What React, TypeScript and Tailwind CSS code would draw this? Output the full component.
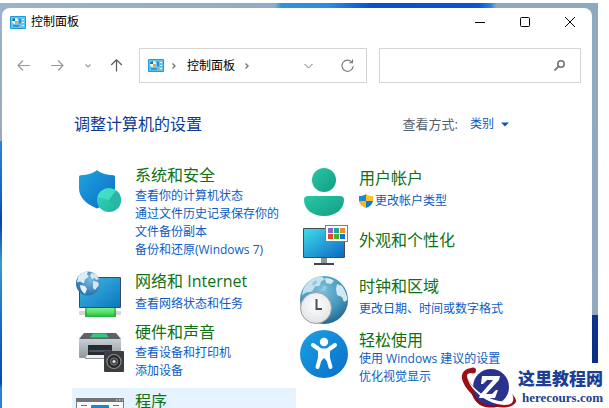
import { useState, type ReactNode } from "react";
import clsx from "clsx";

type Category = {
  id: string;
  title: string;
  icon: ReactNode;
  links: string[];
  className?: string;
  iconClassName?: string;
  textClassName?: string;
  linksClassName?: string;
  shielded?: boolean;
  active?: boolean;
};

const leftColumn: Category[] = [
  {
    id: "security",
    title: "系统和安全",
    icon: <SecurityIcon />,
    links: ["查看你的计算机状态", "通过文件历史记录保存你的文件备份副本", "备份和还原(Windows 7)"],
    className: "pt-1 pb-2.5",
    iconClassName: "self-start pt-0.5",
    linksClassName: "mt-0.5",
  },
  {
    id: "network",
    title: "网络和 Internet",
    icon: <NetworkIcon />,
    links: ["查看网络状态和任务"],
    className: "pt-0.5",
    iconClassName: "self-center",
    linksClassName: "mt-1",
  },
  {
    id: "hardware",
    title: "硬件和声音",
    icon: <HardwareIcon />,
    links: ["查看设备和打印机", "添加设备"],
    className: "pt-[3px] pb-2",
    iconClassName: "self-center",
    linksClassName: "mt-0.5",
  },
  {
    id: "programs",
    title: "程序",
    icon: <ProgramsIcon />,
    links: [],
    className: "pt-[3px] pb-2",
    iconClassName: "self-center",
    active: true,
  },
];

const rightColumn: Category[] = [
  {
    id: "accounts",
    title: "用户帐户",
    icon: <AccountsIcon />,
    links: ["更改帐户类型"],
    linksClassName: "mt-1",
    shielded: true,
  },
  {
    id: "appearance",
    title: "外观和个性化",
    icon: <AppearanceIcon />,
    links: [],
    textClassName: "pt-2",
  },
  {
    id: "clock",
    title: "时钟和区域",
    icon: <ClockIcon />,
    links: ["更改日期、时间或数字格式"],
    linksClassName: "mt-1",
  },
  {
    id: "access",
    title: "轻松使用",
    icon: <AccessIcon />,
    links: ["使用 Windows 建议的设置", "优化视觉显示"],
  },
];

function ControlPanelIcon() {
  return (
    <svg viewBox="0 0 16 13" className="h-[13px] w-4 shrink-0" aria-hidden="true">
      <rect width="16" height="13" rx="1" fill="#1f9ad6" />
      <rect x="1" y="1" width="14" height="11" fill="#5cc6f5" />
      <circle cx="5" cy="5" r="3" fill="#f4f9fc" />
      <path d="M5 5V2a3 3 0 0 0-3 3z" fill="#176fb5" />
      <path d="M5 5h3a3 3 0 0 1-3 3z" fill="#e8a33c" />
      <path d="M12 3.500h2M12 6.500h2M12 9.500h2" stroke="#fff" strokeWidth="1" />
      <path d="M10 2.500v5M3 10h6" stroke="#1667a8" strokeWidth="1.200" />
      <path d="M9.500 10h2" stroke="#e8a33c" strokeWidth="1" />
    </svg>
  );
}

function SecurityIcon() {
  return (
    <svg viewBox="0 0 48 48" className="size-12" aria-hidden="true">
      <defs>
        <linearGradient id="sec-a" x1="0" y1="0" x2="1" y2="1">
          <stop offset="0" stopColor="#1fa5dd" />
          <stop offset="1" stopColor="#0b6bc9" />
        </linearGradient>
        <linearGradient id="sec-b" x1="0" y1="0" x2="1" y2="1">
          <stop offset="0" stopColor="#34dcc0" />
          <stop offset="1" stopColor="#1fae9b" />
        </linearGradient>
      </defs>
      <path d="M21 3c4 3.500 9 4.800 16.500 5.200q1.500.1 1.500 1.800v11c0 9-6 15.500-18 20.500C9 36.500 3 30 3 21V10q0-1.700 1.500-1.800C12 7.800 17 6.500 21 3z" fill="url(#sec-a)" />
      <circle cx="33" cy="33" r="12" fill="url(#sec-b)" />
      <path d="M33 33l7-9.500A12 12 0 0 1 41 42z" fill="#27b7a4" />
      <path d="M33 33L21.500 30A12 12 0 0 1 40 23.500z" fill="#4be3cc" opacity=".7" />
    </svg>
  );
}

function NetworkIcon() {
  return (
    <svg viewBox="0 0 48 48" className="size-12" aria-hidden="true">
      <defs>
        <linearGradient id="net-a" x1="0" y1="0" x2="1" y2="1">
          <stop offset="0" stopColor="#3fb8e6" />
          <stop offset="1" stopColor="#0d78bd" />
        </linearGradient>
        <radialGradient id="net-b" cx=".6" cy=".35" r=".7">
          <stop offset="0" stopColor="#7cbbe0" />
          <stop offset="1" stopColor="#1c6da6" />
        </radialGradient>
        <linearGradient id="net-c" x1="0" y1="0" x2="0" y2="1">
          <stop offset="0" stopColor="#7dee86" />
          <stop offset=".5" stopColor="#54e066" />
          <stop offset="1" stopColor="#22b03f" />
        </linearGradient>
      </defs>
      <rect x="3" y="6" width="42" height="31" rx="1" fill="#3c4a55" />
      <rect x="4" y="7" width="40" height="29" fill="url(#net-a)" />
      <rect x="3" y="40" width="42" height="4" rx="1" fill="#d4d7d9" />
      <rect x="9" y="37" width="31" height="9" rx="1" fill="url(#net-c)" />
      <path d="M10 37v9M39 37v9" stroke="#1a9a3a" strokeWidth="1" />
      <circle cx="12" cy="12.500" r="12" fill="url(#net-b)" />
      <path d="M2 6c3-4 6-5.500 10-5.500l-1 3 2 2-4 3-1 4-4-2-3 1z" fill="#dcecf6" />
      <path d="M4 14l5 1 2 3-2 5c-3-2-5-5-5-9z" fill="#e6f1f8" />
      <path d="M15 2l5 1 3 5-3 1-1-2-3 1-2-3zM17 10l5 1 1 3-4 5-2-2z" fill="#d3e7f3" />
    </svg>
  );
}

function HardwareIcon() {
  return (
    <svg viewBox="0 0 48 48" className="size-12" aria-hidden="true">
      <defs>
        <linearGradient id="hw-a" x1="0" y1="0" x2="0" y2="1">
          <stop offset="0" stopColor="#c9cfd4" />
          <stop offset="1" stopColor="#8e979e" />
        </linearGradient>
      </defs>
      <path d="M8 6h32l5 6H3z" fill="#5a6268" />
      <path d="M17 6.500h13l3 4H14z" fill="#35c879" />
      <rect x="3" y="12" width="42" height="19" rx="1" fill="url(#hw-a)" />
      <path d="M12 18h24v10H12z" fill="#262c31" />
      <path d="M13 23h22v2H13z" fill="#4c555c" />
      <path d="M11 28h26l-1 4H9z" fill="#eef0f1" />
      <path d="M9 31h20v1H9z" fill="#8b9399" />
      <rect x="28" y="24" width="20" height="21" rx="1" fill="#3b3e41" />
      <circle cx="38" cy="34.500" r="7" fill="#232527" stroke="#898e92" strokeWidth="1.200" />
      <circle cx="38" cy="34.500" r="3.800" fill="#46494c" stroke="#6f7478" />
      <circle cx="38" cy="34.500" r="1.500" fill="#dfe3e6" />
    </svg>
  );
}

function ProgramsIcon() {
  return (
    <svg viewBox="0 0 48 48" className="size-12" aria-hidden="true">
      <path d="M0 7h48v41H0z" fill="#7c8184" />
      <path d="M1 11h46v36H1z" fill="#f6f8f9" />
      <path d="M0 7h48v4H0z" fill="#6f7376" />
      <path d="M40 9h1.500M43 9h1.500M46 9h1" stroke="#fff" strokeWidth="1" />
      <rect x="15" y="14" width="18" height="18" rx="1" fill="#1a86d2" />
      <path d="M5 14.500h6M5 22.500h6M37 14.500h6M37 22.500h6" stroke="#6f7376" strokeWidth="1" />
    </svg>
  );
}

function AccountsIcon() {
  return (
    <svg viewBox="0 0 48 48" className="size-12" aria-hidden="true">
      <defs>
        <linearGradient id="acc-a" x1="0" y1="0" x2="1" y2="1">
          <stop offset="0" stopColor="#27c8a6" />
          <stop offset="1" stopColor="#149c83" />
        </linearGradient>
      </defs>
      <circle cx="24" cy="12" r="12" fill="url(#acc-a)" />
      <path d="M8 28h32q4 0 4 4c0 9-8 16-20 16S4 41 4 32q0-4 4-4z" fill="url(#acc-a)" />
    </svg>
  );
}

function AppearanceIcon() {
  return (
    <svg viewBox="0 0 48 48" className="size-12" aria-hidden="true">
      <defs>
        <linearGradient id="app-a" x1="0" y1="0" x2="1" y2="1">
          <stop offset="0" stopColor="#3fdbe8" />
          <stop offset="1" stopColor="#0c68c6" />
        </linearGradient>
      </defs>
      <rect x="3" y="6" width="42" height="30" rx="1" fill="#414c57" />
      <rect x="4" y="7" width="40" height="28" fill="url(#app-a)" />
      <path d="M21 36h6v5h-6z" fill="#8c959c" />
      <path d="M14 41h20v2H14z" fill="#3d464e" />
      <rect x="25.500" y="3.500" width="22" height="16" fill="#fff" stroke="#7a7f84" />
      <path d="M28 6h5v5h-5z" fill="#8c64c8" />
      <path d="M34 6h5v5h-5z" fill="#17a79a" />
      <path d="M40 6h5v5h-5z" fill="#f08a24" />
      <path d="M28 12h5v5h-5z" fill="#dc4a22" />
      <path d="M34 12h5v5h-5z" fill="#4fae22" />
      <path d="M40 12h5v5h-5z" fill="#1274d4" />
    </svg>
  );
}

function ClockIcon() {
  return (
    <svg viewBox="0 0 48 48" className="size-12" aria-hidden="true">
      <defs>
        <radialGradient id="clk-a" cx=".45" cy=".3" r=".75">
          <stop offset="0" stopColor="#7fc0da" />
          <stop offset=".6" stopColor="#4396bd" />
          <stop offset="1" stopColor="#215f83" />
        </radialGradient>
        <radialGradient id="clk-b" cx=".5" cy=".4" r=".7">
          <stop offset="0" stopColor="#ffffff" />
          <stop offset="1" stopColor="#dcdfe1" />
        </radialGradient>
      </defs>
      <circle cx="24" cy="24" r="24" fill="url(#clk-a)" />
      <path d="M3 14C7 5 14 1 22 .5l3 3-4 2-1 4-5 1-3 5-6 1-4 3z" fill="#c6e2ee" />
      <path d="M25 2c4 0 7 1 9 3l-3 3-5-1zM37 8l5 2c3 4 5 9 5.500 14L44 26l-2-5-5-2-1-6z" fill="#d3e8f2" />
      <path d="M24 9l3 2-2 4-4-1zM12 7l4-3 1 3-4 3z" fill="#8fcbe2" />
      <circle cx="16" cy="32" r="15.500" fill="url(#clk-b)" stroke="#9a9ea1" strokeWidth="1" />
      <path d="M16.500 23v10H22" fill="none" stroke="#4d5154" strokeWidth="2" />
    </svg>
  );
}

function AccessIcon() {
  return (
    <svg viewBox="0 0 48 48" className="size-12" aria-hidden="true">
      <defs>
        <linearGradient id="ace-a" x1="0" y1="0" x2="1" y2="1">
          <stop offset="0" stopColor="#1ba1e4" />
          <stop offset="1" stopColor="#0a6ecb" />
        </linearGradient>
      </defs>
      <circle cx="24" cy="24" r="24" fill="url(#ace-a)" />
      <circle cx="24" cy="12" r="4.200" fill="#fff" />
      <path
        d="M13 15l7 5v8l-2.500 9M35 15l-7 5v8l2.500 9"
        fill="none"
        stroke="#fff"
        strokeWidth="4"
        strokeLinecap="round"
        strokeLinejoin="round"
      />
      <path d="M18 18.500h12v11l-3 1.500-3-3-3 3-3-1.500z" fill="#fff" />
    </svg>
  );
}

function UacShield() {
  return (
    <svg viewBox="0 0 14 14" className="size-3.5 shrink-0" aria-hidden="true">
      <path d="M7 0C5 1.500 3 2 0 2v5h7z" fill="#1d86d6" />
      <path d="M7 0c2 1.500 4 2 7 2v5H7z" fill="#f9c22b" />
      <path d="M0 7h7v7C3 12.500.500 10.500 0 7z" fill="#f5b81f" />
      <path d="M14 7H7v7c4-1.500 6.500-3.500 7-7z" fill="#1878c8" />
    </svg>
  );
}

function CategoryItem({ item }: { item: Category }) {
  return (
    <li className={clsx("flex gap-[11px] px-1", item.active && "bg-[#e5f3ff]", item.className)}>
      <div className={clsx("shrink-0", item.iconClassName)}>{item.icon}</div>
      <div className={clsx("min-w-0 flex-1 pr-2", item.textClassName)}>
        <h2 className="text-base leading-5 text-[#0f7113]">
          <a href={`#${item.id}`}>{item.title}</a>
        </h2>
        {item.links.length > 0 && (
          <ul className={clsx("text-xs leading-[18px] text-[#0b5cc4]", item.linksClassName)}>
            {item.links.map((link) => (
              <li key={link}>
                <a href={`#${item.id}`} className={clsx(item.shielded && "flex items-center gap-0.5")}>
                  {item.shielded && <UacShield />}
                  {link}
                </a>
              </li>
            ))}
          </ul>
        )}
      </div>
    </li>
  );
}

function TitleBar() {
  return (
    <header className="flex h-7 items-center pl-2">
      <div className="flex flex-1 items-center gap-[5px]">
        <ControlPanelIcon />
        <span className="text-xs leading-5 text-black">控制面板</span>
      </div>
      <div className="flex text-black">
        <button type="button" aria-label="最小化" className="flex h-7 w-[45px] items-center justify-center">
          <svg viewBox="0 0 10 10" className="size-2.5" stroke="currentColor" fill="none">
            <path d="M0 5.500h10" />
          </svg>
        </button>
        <button type="button" aria-label="最大化" className="flex h-7 w-[45px] items-center justify-center">
          <svg viewBox="0 0 10 10" className="size-2.5" stroke="currentColor" fill="none">
            <rect x=".5" y=".5" width="9" height="9" rx="1" />
          </svg>
        </button>
        <button type="button" aria-label="关闭" className="flex h-7 w-[45px] items-center justify-center">
          <svg viewBox="0 0 10 10" className="size-2.5" stroke="currentColor" fill="none">
            <path d="M0 0l10 10M10 0L0 10" />
          </svg>
        </button>
      </div>
    </header>
  );
}

function NavBar() {
  const [query, setQuery] = useState("");

  return (
    <nav className="flex items-center pt-3 pr-[11px] pl-[15px]">
      <div className="mr-4 flex items-center text-[#9a9a9a]">
        <button type="button" aria-label="后退" className="mr-[21px]">
          <svg viewBox="0 0 13 13" className="size-[13px]" fill="none" stroke="currentColor" strokeWidth="1.200">
            <path d="M13 6.500H1M6 1.500L1 6.500l5 5" />
          </svg>
        </button>
        <button type="button" aria-label="前进" className="mr-[21px]">
          <svg viewBox="0 0 13 13" className="size-[13px]" fill="none" stroke="currentColor" strokeWidth="1.200">
            <path d="M0 6.500h12M7 1.500l5 5-5 5" />
          </svg>
        </button>
        <button type="button" aria-label="最近浏览的位置" className="mr-[19px]">
          <svg viewBox="0 0 6 4" className="h-1 w-1.5" fill="none" stroke="currentColor" strokeWidth="1.200">
            <path d="M.500.500L3 3l2.500-2.500" />
          </svg>
        </button>
        <button type="button" aria-label="上移" className="text-[#5f5f5f]">
          <svg viewBox="0 0 13 13" className="size-[13px]" fill="none" stroke="currentColor" strokeWidth="1.300">
            <path d="M6.500 12.500V1M1.200 6l5.300-5.200L11.800 6" />
          </svg>
        </button>
      </div>

      <div className="flex h-[35px] flex-[206] items-center border border-[#d5d5d5] pr-3 pl-2 text-[#777]">
        <ControlPanelIcon />
        <svg viewBox="0 0 4 6" className="ml-2 h-1.5 w-1" fill="none" stroke="currentColor" strokeWidth="1.400">
          <path d="M.500.500L3 3 .500 5.500" />
        </svg>
        <a href="#home" className="ml-[11px] text-xs text-black">
          控制面板
        </a>
        <svg viewBox="0 0 4 6" className="ml-2.5 h-1.5 w-1" fill="none" stroke="currentColor" strokeWidth="1.400">
          <path d="M.500.500L3 3 .500 5.500" />
        </svg>
        <button type="button" aria-label="以前的位置" className="ml-auto">
          <svg viewBox="0 0 9 6" className="h-1.5 w-[9px]" fill="none" stroke="currentColor">
            <path d="M.500 1l4 4 4-4" />
          </svg>
        </button>
        <button type="button" aria-label="刷新" className="ml-7">
          <svg viewBox="0 0 13 13" className="size-[13px]" fill="none" stroke="currentColor" strokeWidth="1.100">
            <path d="M11.200 3.500A5.600 5.600 0 1 0 12.200 7M11.500.500v3.300H8.200" />
          </svg>
        </button>
      </div>

      <div className="ml-3 flex h-[35px] flex-[177] items-center border border-[#d5d5d5] pr-[15px] pl-2">
        <input
          type="search"
          aria-label="搜索控制面板"
          value={query}
          onChange={(e) => setQuery(e.target.value)}
          className="w-full min-w-0 flex-1 bg-transparent text-xs text-black outline-none"
        />
        <svg viewBox="0 0 11 11" className="size-[11px] shrink-0" fill="none" stroke="#707070" aria-hidden="true">
          <circle cx="7" cy="4" r="3.200" strokeWidth="1.500" />
          <path d="M4.600 6.400L.500 10.500" strokeWidth="1.700" />
        </svg>
      </div>
    </nav>
  );
}

function Watermark() {
  return (
    <div className="absolute right-1.5 bottom-0 flex items-center">
      <svg viewBox="0 0 58 41" className="h-[41px] w-[58px]" aria-hidden="true">
        <path
          d="M11 1C3 2 0 8 3 15c5 12 19 22 34 25 10 1.500 17-1 19-5 .500-2-1-5-4-8 2 6-1 9-7 8C29 33 13 23 8 12 6 8 7 6 12 6z"
          fill="#9a1016"
        />
        <path d="M11 23c1 8 6 15 14 17 6 1 12 .500 17-1C30 37 18 31 11 23z" fill="#8b0d14" />
        <circle cx="13" cy="3.500" r="3" fill="#9a1016" />
        <circle cx="31" cy="20" r="18" fill="#29328c" />
        <path d="M7 9c3 11 17 22 32 25 9 1.500 14-1 13-7 3 6 1 11-7 11C28 38 9 23 7 9z" fill="#fff" />
        <path d="M22 9h18l-1 4-13 14h6l4-4h2l-3 8H19l1-3 13-15h-6l-4 4h-2z" fill="#fff" />
      </svg>
      <div className="flex flex-col items-end text-[#1d3f94]">
        <span className="font-['Liberation_Serif','Noto_Sans_CJK_SC',serif] text-[17px] leading-5 font-black">这里教程网</span>
        <span className="font-['Liberation_Serif',serif] text-[13px] leading-4 font-bold">herecours.com</span>
      </div>
    </div>
  );
}

export default function App() {
  const [view, setView] = useState("类别");

  return (
    <div className="relative h-screen overflow-hidden bg-white pt-[3px] pr-[11px] font-['Open_Sans','Noto_Sans_CJK_SC',sans-serif]">
      {/* Desktop wallpaper, visible only round the window's edges */}
      <div className="flex h-full bg-[linear-gradient(to_right,#9ab3c8_0%,#8fadc6_46%,#2f93dc_47%,#2a8be0_55%,#0a4fd0_62%,#0b52d4_80%,#2b7fe0_82%,#8ca9bf_83%)]">
        <div className="w-0.5 bg-[linear-gradient(to_bottom,#9ab3c8_0%,#9aaabc_34%,#2a86cc_34%,#1463bd_48%,#0a3fae_54%,#3a9ad0_64%,#1561c0_82%,#0a48b4_94%,#2c80cc_95%)]" />
        <div className="flex min-w-0 flex-1 flex-col pt-[5px]">
          <main className="flex-1 overflow-hidden rounded-t-lg bg-white">
            <TitleBar />
            <NavBar />

            <div className="flex items-center justify-between pt-[31px] pr-[83px] pl-[72px]">
              <h1 className="text-base leading-5 text-[#0b3a94]">调整计算机的设置</h1>
              <div className="flex items-center">
                <label htmlFor="view" className="mr-3 text-[13px] leading-5 text-[#56606f]">
                  查看方式:
                </label>
                <select
                  id="view"
                  value={view}
                  onChange={(e) => setView(e.target.value)}
                  className="appearance-none bg-transparent text-xs leading-5 text-[#0b5cc4] outline-none"
                >
                  <option>类别</option>
                </select>
                <svg viewBox="0 0 8 5" className="ml-1.5 h-[5px] w-2" fill="#0b5cae" aria-hidden="true">
                  <path d="M0 .500h8L4 4.500z" />
                </svg>
              </div>
            </div>

            <div className="grid grid-cols-2 pt-[27px] pr-[72px] pl-[70px]">
              <ul className="flex flex-col">
                {leftColumn.map((item) => (
                  <CategoryItem key={item.id} item={item} />
                ))}
              </ul>
              <ul className="flex flex-col gap-1.5 pt-[7px]">
                {rightColumn.map((item) => (
                  <CategoryItem key={item.id} item={item} />
                ))}
              </ul>
            </div>
          </main>
        </div>
        <div className="w-1.5 bg-[linear-gradient(to_bottom,#8ca9bf_0%,#93a9c0_77%,#0b3590_77%,#0a2f86_89%,#ffffff_89%)]" />
      </div>
      <Watermark />
    </div>
  );
}
